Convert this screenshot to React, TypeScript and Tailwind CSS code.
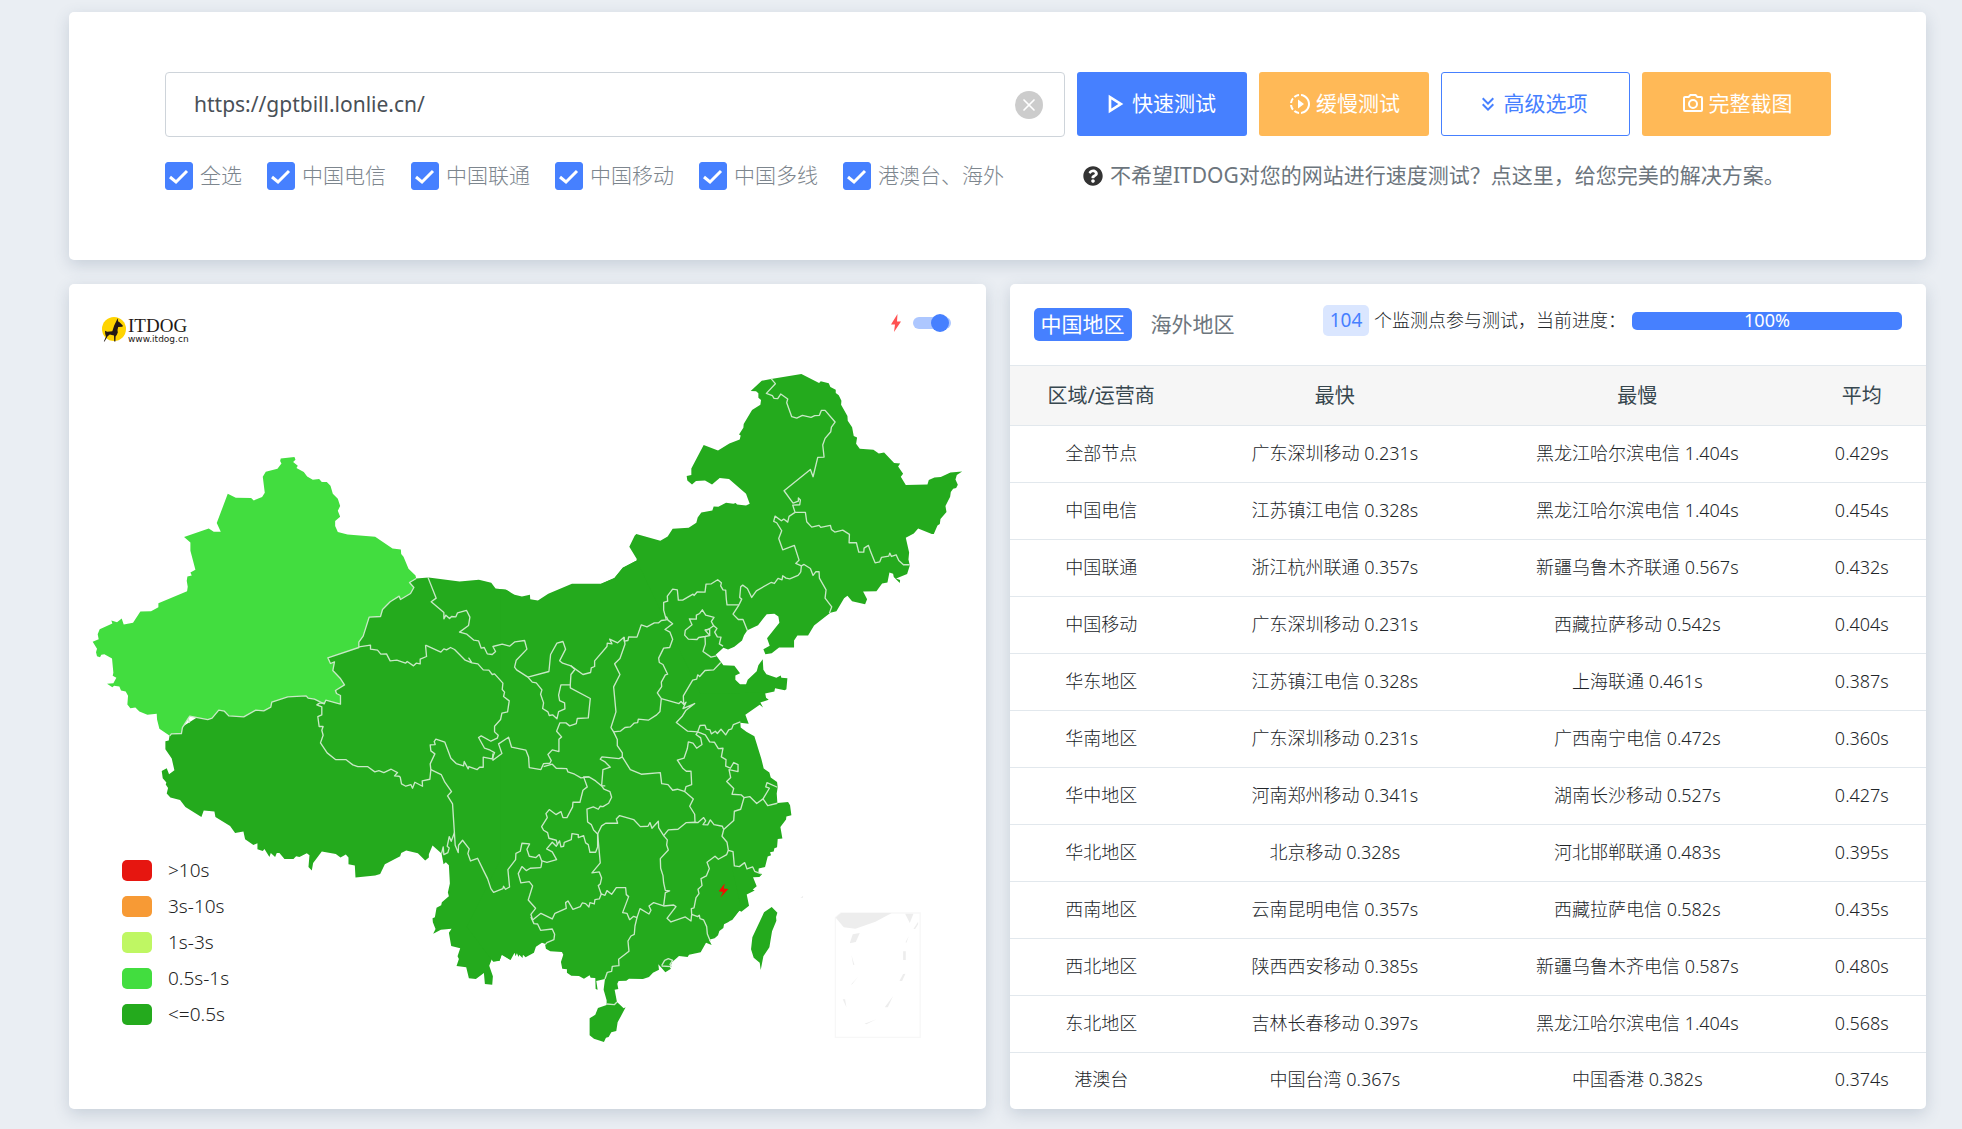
import React, { useState } from 'react';
import { X } from 'lucide-react';
import { FaQuestionCircle } from 'react-icons/fa';
import { MdOutlineSlowMotionVideo } from 'react-icons/md';

const carriers = ['全选', '中国电信', '中国联通', '中国移动', '中国多线', '港澳台、海外'];

const legend = [
  { label: '>10s', color: 'bg-[#e61610]' },
  { label: '3s-10s', color: 'bg-[#f79a35]' },
  { label: '1s-3s', color: 'bg-[#bff763]' },
  { label: '0.5s-1s', color: 'bg-[#42dd3f]' },
  { label: '<=0.5s', color: 'bg-[#24aa1d]' },
];

const results = [
  { area: '全部节点', fastest: '广东深圳移动 0.231s', slowest: '黑龙江哈尔滨电信 1.404s', average: '0.429s' },
  { area: '中国电信', fastest: '江苏镇江电信 0.328s', slowest: '黑龙江哈尔滨电信 1.404s', average: '0.454s' },
  { area: '中国联通', fastest: '浙江杭州联通 0.357s', slowest: '新疆乌鲁木齐联通 0.567s', average: '0.432s' },
  { area: '中国移动', fastest: '广东深圳移动 0.231s', slowest: '西藏拉萨移动 0.542s', average: '0.404s' },
  { area: '华东地区', fastest: '江苏镇江电信 0.328s', slowest: '上海联通 0.461s', average: '0.387s' },
  { area: '华南地区', fastest: '广东深圳移动 0.231s', slowest: '广西南宁电信 0.472s', average: '0.360s' },
  { area: '华中地区', fastest: '河南郑州移动 0.341s', slowest: '湖南长沙移动 0.527s', average: '0.427s' },
  { area: '华北地区', fastest: '北京移动 0.328s', slowest: '河北邯郸联通 0.483s', average: '0.395s' },
  { area: '西南地区', fastest: '云南昆明电信 0.357s', slowest: '西藏拉萨电信 0.582s', average: '0.435s' },
  { area: '西北地区', fastest: '陕西西安移动 0.385s', slowest: '新疆乌鲁木齐电信 0.587s', average: '0.480s' },
  { area: '东北地区', fastest: '吉林长春移动 0.397s', slowest: '黑龙江哈尔滨电信 1.404s', average: '0.568s' },
  { area: '港澳台', fastest: '中国台湾 0.367s', slowest: '中国香港 0.382s', average: '0.374s' },
];

const icons = {
  play: 'M8.5,8.64L13.77,12L8.5,15.36V8.64M6.5,5V19L17.5,12',
  chevrons:
    'M16.59,5.59L18,7L12,13L6,7L7.41,5.59L12,10.17L16.59,5.59M16.59,11.59L18,13L12,19L6,13L7.41,11.59L12,16.17L16.59,11.59Z',
  camera:
    'M20,4H16.83L15,2H9L7.17,4H4A2,2 0 0,0 2,6V18A2,2 0 0,0 4,20H20A2,2 0 0,0 22,18V6A2,2 0 0,0 20,4M20,18H4V6H8.05L9.88,4H14.12L15.95,6H20V18M12,7A5,5 0 0,0 7,12A5,5 0 0,0 12,17A5,5 0 0,0 17,12A5,5 0 0,0 12,7M12,15A3,3 0 0,1 9,12A3,3 0 0,1 12,9A3,3 0 0,1 15,12A3,3 0 0,1 12,15Z',
};

const Icon = ({ name, className }: { name: keyof typeof icons; className: string }) => (
  <svg viewBox="0 0 24 24" fill="currentColor" className={className} aria-hidden="true">
    <path d={icons[name]} />
  </svg>
);

const Logo = () => (
  <div className="mt-[3px] flex items-start gap-[2px]">
    <svg viewBox="0 0 24 25" className="w-6 h-[25px]" aria-hidden="true">
      <circle cx="12" cy="12" r="12" fill="#ffd400" />
      <path
        fill="#231815"
        d="M15.7 1.2L16.2 4.6L17.5 5.2L20.8 8.6L20.5 9.8L16.2 9.9L15.5 13L15.8 15.5L14.7 18L13.6 19.5L13.4 24.5H12.2L12 18.6L7.8 17.6L5.6 19.3L2.6 24.5H1.8L4 19.5L3.2 17L3 13.8L5.2 14.8L10.3 14.2L12.2 8.5Z"
      />
    </svg>
    <div className="text-[#231815]">
      <div className="text-[19px] leading-[18px] font-['Liberation_Serif',serif]">ITDOG</div>
      <div className="text-[9px] leading-[8px] font-['DejaVu_Sans',sans-serif]">www.itdog.cn</div>
    </div>
  </div>
);

const ChinaMap = () => (
  <svg viewBox="0 198 2748 2100" className="block w-full" role="img" aria-label="中国地区测速地图">
    <g fill="#24aa1d">
      {/* Tibet, Qinghai, Yunnan */}
      <path
        transform="translate(-27 1248)"
        d="M329 104L326 121L316 123V147L335 175L343 210L327 222L320 204L305 212L308 234L319 247L317 253L324 263L320 280L331 292L360 299L376 320L424 350L431 331L463 334L466 350L510 377L525 398L550 394L555 417L580 434L592 429V447L608 452L613 446L628 470L632 458L645 470L650 458H658L673 476H700L708 468L718 470L740 459L748 465L745 500L755 511L759 488L785 454L827 461L841 472L857 463L865 472V492L884 496L886 532L945 526L960 521L974 492L1020 468L1023 458L1038 451L1073 459L1095 481L1106 472V462L1117 436L1144 460L1150 492L1157 486L1166 495L1169 550L1163 577L1166 588L1145 606L1143 615L1129 622L1124 651L1117 654L1118 666L1126 686L1119 700L1142 688L1174 685L1166 697L1173 737L1200 744L1192 768L1196 776L1189 797L1218 801L1226 834L1247 836L1271 818L1274 851L1296 853L1298 828L1287 796L1295 776L1300 783L1318 781L1325 762L1350 778V-324L1338 -331L1306 -335L1293 -352L1256 -361L1198 -356L1105 -368L1068 -365Z"
      />
      {/* Northeast */}
      <path
        transform="translate(1593 198)"
        d="M0 702L43 684L68 653L109 631V626L87 590L103 557L108 552L180 572L202 559L217 536L265 533L288 518L292 502L303 487L336 481L340 469L354 470L377 458L399 461L406 459L410 463L437 466L448 461L437 431L386 387L358 384L335 403L314 391L287 393L275 403L261 391L259 378L273 375V355L310 285L353 301L387 280L418 268L421 256L416 253L429 233L430 222L455 180L480 164L482 150L474 143V130L467 124L451 123L484 92L512 87L603 72L656 99L661 94L685 100L690 111L706 119V129L715 136L723 152L722 164L741 198L742 212L755 232L760 258L770 262L767 281L778 296L819 299L835 310L851 307L881 339L899 340L893 349L908 371L901 380L916 405L981 403L985 390L1002 382L1021 381L1050 367L1085 364L1069 375L1065 388L1072 404L1067 414L1058 416L1051 426L1049 440L1035 468L1038 486L1020 507L1018 522L1011 526L1000 552H994L953 535L940 550L916 563L926 607L924 628L928 646L920 672L887 685L899 690L898 699L880 681L878 671L867 667L861 697L845 700L828 723L788 724L800 747L794 762L755 753L741 737L731 744L708 783L690 788L641 826L623 856H591L581 871V892H536L514 909L495 912L489 897L508 887L500 864L537 818L534 799L522 791L499 792L473 825L441 840L431 855L425 871L402 890L383 898L369 893L361 900L346 914L360 933L369 945L402 947L419 969L405 976V989L419 1002H437L442 989L469 963L474 945L487 927L489 959L498 972L528 983L541 976L543 983L561 984L558 1017L553 1020L524 1014L522 1024L494 1030V1050H0Z"
      />
      {/* Central and east */}
      <path
        transform="translate(993 768)"
        d="M300 147L317 149L343 164L365 169L389 164L390 177L413 181L444 161L515 131H602L642 114L667 83L709 61L900 460L1094 458L1097 473L1105 479L1080 487L1088 502L1078 494L1035 524L1045 551L1020 548L1021 562L1038 575L1062 588L1083 656L1090 685L1107 697L1111 712L1130 725L1132 740L1129 760L1131 788L1163 785L1169 795L1173 825L1158 829L1157 838L1140 860L1146 895L1132 896L1130 921L1122 924L1120 934L1109 936L1112 945L1102 949L1094 980L1075 985L1074 997L1085 1002L1077 1010L1058 1011L1069 1038L1057 1048L1063 1051L1039 1063L1046 1096L1025 1113L1018 1110L995 1140H300Z"
      />
      {/* South coast and Hainan */}
      <path
        transform="translate(993 1428)"
        d="M1025 454L1016 451L992 480L983 486L971 492L969 503L957 512L953 525L943 534L926 538L934 554L917 547L901 576L866 583L862 590L836 587L815 606L809 622L812 625L795 636L774 612L776 628L758 637L746 650L728 656L686 655L678 661L655 662L651 670L654 686L643 688L650 725L670 744L676 741L652 786L648 812L633 816L625 830L617 832L611 845L581 835L568 825V774L585 763L593 743L619 734V720L610 688L614 656L588 662L592 688L586 686L585 653L571 652L568 645L551 655L536 647L513 646L500 637V627L486 625L482 605L489 583L485 575L450 573L437 565L434 550L425 547L407 559L401 577L376 591L368 583L367 593L357 583L355 590L350 579L346 588L343 577L331 599L304 583L298 601L279 604L200 500L300 300L990 300Z"
      />
      {/* Taiwan */}
      <path
        transform="translate(993 1428)"
        d="M1114 440L1131 457L1127 470L1128 481L1115 513L1107 561L1089 588L1081 629L1078 607L1060 592L1052 567L1056 531L1091 456Z"
      />
    </g>

    {/* Province borders */}
    <g fill="none" stroke="#c8e9c6" strokeWidth="4" strokeLinejoin="round">
      {/* Xinjiang */}
      <path
        transform="translate(-27 -12)"
        fill="#42dd3f"
        stroke="none"
        d="M662 535L703 531L706 539L699 546L713 557L709 564L731 576L741 589L758 599L777 597L785 606H800L811 617L818 641L833 656L840 678L833 692L840 710L825 723V738L833 756L862 763L945 770L997 805L1022 808L1023 822L1030 830L1045 866L1066 886L1068 895L1048 907L1061 922L1051 940L1021 958L1017 948L990 965L967 988L961 1009L927 1011L909 1068L896 1086V1102L803 1133L811 1150L823 1145L818 1171L840 1194L853 1214L826 1231L829 1240L841 1246V1272L797 1260L792 1271L763 1257L744 1254L738 1247L683 1250L635 1266L632 1281L611 1292L587 1290L551 1310L506 1307L493 1293L476 1290L456 1314L443 1318L389 1308L384 1315L367 1342L364 1360L334 1361L329 1367L298 1346L291 1318L290 1301L262 1304L238 1294L226 1282L211 1284L202 1273L204 1247L197 1234L183 1231L178 1219L162 1217L157 1221L141 1211L160 1209L169 1193L158 1187L160 1178L156 1135L133 1122L124 1124L120 1131L111 1128L108 1116L111 1106L98 1085L116 1077L113 1062L119 1047L157 1030L154 1021L171 1026L185 1015L191 1033L219 1028L241 994L273 993L295 981V969L381 933L383 920L380 902L382 889L395 886L391 877L406 869L391 812V787L372 771L446 745L461 755H482L470 729L503 641L527 653L573 654L581 661L606 651L614 638L608 590L617 575L652 566L664 550L660 543Z"
      />
      <g transform="translate(-27 -12)">
        <path d="M1068 895L1048 907L1061 922L1051 940L1021 958L1017 948L990 965L967 988L961 1009L927 1011L909 1068L896 1086V1102L803 1133L811 1150L823 1145L818 1171L840 1194L853 1214L826 1231L829 1240L841 1246V1272L797 1260L792 1271L763 1257L744 1254L738 1247L683 1250L635 1266L632 1281L611 1292L587 1290L551 1310L506 1307L493 1293L476 1290L456 1314L443 1318L389 1308L384 1315L388 1326L384 1315L367 1342L364 1360L334 1361L329 1367" />
        <path d="M896 1100L931 1095V1107L952 1110L962 1122L979 1121L990 1142L1010 1140L1036 1149L1041 1144L1060 1157L1068 1149L1080 1151V1137L1099 1129L1096 1095" />
      </g>
      <path
        transform="translate(-27 1248)"
        d="M1020 230L1017 228L1003 227L1012 217L993 207L971 217L956 211L944 215L922 199H893L878 194L857 178H826L801 158L781 128L789 105L785 90L789 79H777L773 49L785 44V20L770 14L778 9H792"
      />
      <g transform="translate(1593 198)">
        <path d="M603 647L586 640L596 630L582 586L547 599L535 565L544 542L529 518L520 514L524 498L543 512L550 507L562 516L566 499L584 487L577 465L598 464L600 450L594 444V453L578 459L551 422L630 358L638 380L652 322L671 321L667 285L674 265L691 245L693 231L704 216L674 181H663L657 196L643 197L632 202L606 196L589 204L574 200L559 158L562 147L541 132L532 146L521 145L516 137L498 130L525 101L512 86" />
        <path d="M584 487H615L619 515L634 531L656 526L661 532L690 526L693 538L703 546L727 540L747 553L746 578H768L775 606H790L791 594L804 586L811 606L824 638L838 635L843 622L865 618L868 609L873 619L887 614L895 631L909 644H928" />
        <path d="M601 666L603 647L611 643L630 655L638 676L646 665H656L657 684L677 719L674 744L694 770L687 789" />
      </g>
      <g transform="translate(993 768)">
        {/* Inner Mongolia */}
        <path d="M83 111L108 174L93 185L131 217V236L137 225L148 235L154 229L167 230L172 218L199 211L209 231L205 256L178 276L200 282L221 300L235 302L243 324L252 322L261 341L276 343L286 334L278 319L306 312L328 318L344 305L373 301L380 327L348 360L343 381L349 389L383 411L446 394L451 343L470 309L488 304L496 327L478 362L487 369L512 377L548 403L571 397L573 383L583 379V362L620 319L621 309L635 311L628 297L652 308L671 291L672 303L683 301L685 290L710 291L723 254L740 260L762 248L775 248L783 241L798 239L790 210V187L802 183L801 168L817 147L831 149L834 180H847L878 162L881 166L891 155L914 156L917 132L933 131L952 119L963 128L961 137L968 149L976 150L978 178L980 194H1016" />
        <path d="M1016 194L1024 177L1018 172L1021 140L1027 135L1041 145L1054 172L1068 152L1112 127L1122 130L1133 115L1145 119L1147 107L1157 114L1168 116L1193 106L1201 96" />
        <path d="M1016 194L998 222L1014 238H1028L1041 271" />
        {/* Shanxi, Hebei, Shandong */}
        <path d="M671 291L674 312L659 355L643 371L659 403L640 440L647 515L632 562L640 575L660 573L674 562L690 560L701 549L712 547L714 537L744 540L769 524L779 514L783 475L771 458L784 439L783 426L795 404L802 402L788 373L777 367L775 354L790 324L808 322L817 297L809 276L794 268L817 251L803 240L798 229" />
        <path d="M783 475L836 490L842 484L850 492L849 467L877 420L889 417L892 404L898 409L914 391L940 389L961 367" />
        <path d="M850 492L857 486L848 505L883 490L857 510L845 529L828 547L862 573L892 575L899 556L914 555L918 567L929 569L933 581L945 573L951 580L962 567L976 584L985 569L994 566L999 553L1020 545" />
        {/* Beijing and Tianjin */}
        <path d="M906 209L916 225L941 232L933 244L940 257L924 268L914 270L928 286L914 289L895 292L890 298L864 297L853 285L855 270L875 254L867 236L888 237V225L898 220Z" />
        <path d="M914 270L928 266V286M940 257L950 265L943 276L951 290L962 291L957 311L968 318M914 289L915 312L908 334L932 351L948 347" />
        {/* Ningxia and Gansu */}
        <path d="M383 411L396 426L408 428L425 449L421 462L430 488L427 505L443 515L447 526L457 524L470 536L475 514L494 506L493 488L478 481L475 465L482 434H510L512 403L524 388L512 377" />
        <path d="M510 434V443L570 475L564 533L531 535L528 550L508 557L497 548H479L469 573L484 590L476 597V634L456 629L443 643L453 661L449 669L430 670L422 688L387 682L385 650L377 630L334 621L325 591L295 611L305 640L278 660V640" />
        <path d="M76 315L122 336L131 326L139 329L151 322L163 328L195 360L215 368L206 354L215 368L233 371L249 389L266 390L276 403L283 401L308 429L306 448L313 456L310 469L327 482L322 515L305 519L301 538L283 558V575L294 585L291 594L272 603L243 587L235 592L253 624L270 630L283 637L275 656L249 651V681H238L231 688L206 679L204 686L192 664L190 677L168 670L152 654L134 606L107 597L102 604L105 613L90 614L92 632L104 641L90 671L92 688L89 717L66 722L67 738L44 726L37 744L32 733L17 738L4 731L0 710" />
        {/* Sichuan, Chongqing, Yunnan */}
        <path d="M92 688L123 703L134 726L154 754L142 767L157 791L165 915L174 937L175 915L187 900L207 926L203 940L211 962L232 954L250 991L262 1015L272 1045L280 1056L308 1045L310 1038L316 1047L328 1040L323 988L346 958L347 939L360 933L365 909L388 911L380 927L387 948L407 952L417 943L425 964L422 982" />
        <path d="M124 940L129 920L131 943L143 937L147 923L141 918L147 889L153 903L163 877" />
        <path d="M425 962L440 966L469 958L456 935L439 926L456 906L468 918L478 902L482 920L490 918L492 906L513 898L515 880L534 883V892L550 886L556 908L564 913L569 936H586L592 920V880" />
        <path d="M430 679L456 672L468 684L499 685L503 695L523 702L542 713L566 710L586 722L604 737H615" />
        <path d="M566 710H550L561 740L548 750L539 786H518L517 800L500 832H488L482 814L467 823L447 808L437 820L441 832L424 859L430 870L442 877L446 894L468 900L472 915" />
        <path d="M604 737L611 747L629 754L634 771L625 789L608 799L600 798L594 807L579 800L560 807L562 845L573 853L580 869L592 881L600 968L575 998L597 995L604 1013L600 1031L594 1036L603 1062" />
        {/* Hubei, Henan, Anhui, Jiangsu */}
        <path d="M640 575L651 598V616L666 638V650L656 655L605 650L600 657L613 664L630 681L608 688L604 737M666 650L690 688L723 702L780 697L784 730L803 733L817 750L831 747L854 754" />
        <path d="M892 575L887 583L901 593L905 613L889 624L878 609L864 605L861 625L851 654L831 660L848 685L858 693H872L874 733L857 739L853 754L879 776L868 798L883 822L884 846" />
        <path d="M892 575L915 584L928 605L942 606L954 625L968 624L963 650L977 658L976 678L990 684L1000 667L1013 673V694L986 688L991 712L979 724L1000 745L995 762L1023 764L1031 772L1048 769L1069 790L1088 776L1102 796L1131 789" />
        <path d="M1088 776L1107 744L1096 740L1100 727L1131 741" />
        {/* Hunan, Jiangxi, Zhejiang, Fujian */}
        <path d="M1031 772L1021 807L1002 813L1000 841L970 868L965 888L980 906L984 930L998 934L1002 977L1017 979L1033 967L1040 986L1057 980L1063 993L1083 1001" />
        <path d="M970 868L966 858L941 853L930 839L922 854L908 853L916 842L910 832L893 847L884 846L858 847L833 867L804 869L790 886L775 862L774 843L755 864L749 847L743 858L720 859L700 838L658 826L648 836L652 849L616 849L604 857L592 881" />
        <path d="M790 886L801 899L799 914L804 929L780 955L781 984L788 1006L790 1028L795 1050L808 1052L795 1057L790 1096" />
        <path d="M984 930L979 943L954 957L944 948L920 966L927 985L918 1007L902 1015L905 1036L893 1047L896 1060L887 1072L881 1103L873 1105L874 1122" />
        <path d="M422 982L390 984L378 991L365 979L354 1000L362 1028L387 1024L397 1037L384 1079L406 1104L392 1122L397 1139" />
      </g>
      <g transform="translate(993 1428)">
        {/* Guangxi, Guangdong, Hainan */}
        <path d="M397 479L422 459L456 476L464 459L498 444L496 427L503 422L518 447L540 439L546 428L556 430L566 440L569 427L582 431L584 418L597 416L603 401L614 405L620 391L634 402L648 382H676L678 403L685 409L667 457L680 459L688 478L700 468L710 472L719 445L746 461L752 450L746 437L760 427L790 437L820 434L827 439L800 474L812 485L855 470L872 482L874 462L892 469L897 465L899 475L910 479L919 499L921 521L930 543" />
        <path d="M710 472L704 497L702 522L692 527L683 542L686 573L655 597L656 616L636 618L634 633L621 636L614 656" />
        <path d="M392 470L401 490L412 491L421 510L456 506L463 522L461 538L440 547L435 553" />
        <path d="M784 616L793 600L804 595L817 600L809 612L813 619L784 617M619 731L642 733L650 725" />
      </g>
    </g>

    {/* Test origin */}
    <path transform="translate(993 768)" fill="#f10d00" d="M973 1030L955 1053L968 1055L960 1072L984 1046L970 1045Z" />

    {/* South China Sea inset */}
    <g transform="translate(2193 1728)" fill="#ededed">
      <path fill="none" stroke="#f7f7f7" strokeWidth="4" d="M122 158H359V531H105V172Z" />
      <path d="M106 172L122 158H274L225 184L165 205L130 201Z" />
      <path d="M314 160H339L328 188ZM353 184V192L344 206H339ZM325 227L318 247L315 246ZM308 273H316V299H308ZM308 341L315 340L305 362H297ZM278 407L262 441H253ZM228 477L198 492L192 490ZM127 417H134L138 441ZM173 349L156 371L151 373ZM153 284L162 314L158 313ZM157 222L178 218L166 245L148 249Z" />
      <path d="M0 113L8 106V112Z" />
    </g>
  </svg>
);

const App = () => {
  const [url, setUrl] = useState('https://gptbill.lonlie.cn/');
  const [region, setRegion] = useState('中国地区');

  return (
    <div className="min-h-screen bg-[#eaeef3] pt-3 pb-5 pl-[69px] pr-9 flex flex-col gap-6 text-[#3a3f44] font-['Noto_Sans','Noto_Sans_CJK_SC',sans-serif]">
      {/* Search form */}
      <section className="bg-white rounded-[5px] shadow-[0_5px_16px_rgba(60,85,115,0.2)] pl-24 pr-[95px] pt-[60px] pb-[69px]">
        <form className="flex gap-3" onSubmit={(e) => e.preventDefault()}>
          <div className="flex-1 h-[65px] flex items-center border border-[#ced4da] rounded pl-7 pr-[21px]">
            <input
              type="text"
              aria-label="网址"
              value={url}
              onChange={(e) => setUrl(e.target.value)}
              className="flex-1 min-w-0 text-[21px] text-[#495057] outline-none"
            />
            <button
              type="button"
              aria-label="清空"
              onClick={() => setUrl('')}
              className="w-7 h-7 rounded-full bg-[#ccc] text-white flex items-center justify-center"
            >
              <X className="w-5 h-5" strokeWidth={2} />
            </button>
          </div>
          <button type="submit" className="w-[170px] h-16 pr-2 rounded-[3px] bg-[#4680ff] text-white text-[21px] flex items-center justify-center">
            <Icon name="play" className="w-8 h-8" />
            快速测试
          </button>
          <button type="button" className="w-[170px] h-16 rounded-[3px] bg-[#ffb957] text-white text-[21px] flex items-center justify-center gap-1">
            <MdOutlineSlowMotionVideo className="w-6 h-6" />
            缓慢测试
          </button>
          <button type="button" className="w-[189px] h-16 pr-2 rounded-[3px] border border-[#4680ff] text-[#4680ff] text-[21px] flex items-center justify-center gap-1">
            <Icon name="chevrons" className="w-6 h-6" />
            高级选项
          </button>
          <button type="button" className="w-[189px] h-16 rounded-[3px] bg-[#ffb957] text-white text-[21px] flex items-center justify-center gap-1">
            <Icon name="camera" className="w-6 h-6" />
            完整截图
          </button>
        </form>

        <div className="mt-[23px] flex items-center gap-3 text-[21px] leading-[31px]">
          <div className="flex-1 flex gap-[25px] text-[#7d868e] font-light">
            {carriers.map((name) => (
              <label key={name} className="flex items-center gap-[7px]">
                <span className="grid w-7 h-7">
                  <input
                    type="checkbox"
                    defaultChecked
                    className="peer [grid-area:1/1] w-7 h-7 appearance-none rounded-[3px] border border-[#4680ff] checked:bg-[#4680ff]"
                  />
                  <svg
                    viewBox="0 0 28 28"
                    className="[grid-area:1/1] w-7 h-7 pointer-events-none invisible peer-checked:visible"
                    aria-hidden="true"
                  >
                    <path d="M5 15L11 20L22 9" fill="none" stroke="#fff" strokeWidth="3" />
                  </svg>
                </span>
                {name}
              </label>
            ))}
          </div>
          <a href="#" className="w-[754px] pl-[6px] flex items-center gap-[7px] text-[#6c757d] whitespace-nowrap">
            <FaQuestionCircle className="w-5 h-5 text-[#333]" />
            <span>不希望ITDOG对您的网站进行速度测试？点这里，给您完美的解决方案。</span>
          </a>
        </div>
      </section>

      <div className="grid grid-cols-2 gap-6">
        {/* Map */}
        <section className="relative bg-white rounded-[5px] shadow-[0_5px_16px_rgba(60,85,115,0.2)]">
          <div className="h-[66px] pt-[30px] pl-[33px] pr-[35px] flex items-start justify-between">
            <Logo />
            <label className="h-[18px] flex items-center gap-3">
              <svg viewBox="0 0 10 18" className="w-[10px] h-[18px]" aria-hidden="true">
                <path d="M6.5 0L0 10.5H4L3 18L10 7.5H6Z" fill="#ff5252" />
              </svg>
              <input
                type="checkbox"
                aria-label="仅显示测速点"
                defaultChecked
                className="relative w-[38px] h-3 appearance-none rounded-full bg-[#adc7ff] before:absolute before:-top-[3px] before:right-[2px] before:w-[18px] before:h-[18px] before:rounded-full before:bg-[#4680ff] before:content-['']"
              />
            </label>
          </div>
          <ChinaMap />
          <ul className="absolute left-[53px] bottom-[76px] flex flex-col text-[19px] leading-8 font-light text-[#222]">
            {legend.map((item) => (
              <li key={item.label} className="h-9 flex items-center gap-4">
                <span className={`w-[30px] h-[21px] rounded-[5px] ${item.color}`} />
                <span className="pb-[2px]">{item.label}</span>
              </li>
            ))}
          </ul>
        </section>

        {/* Results */}
        <section className="bg-white rounded-[5px] overflow-hidden shadow-[0_5px_16px_rgba(60,85,115,0.2)]">
          <div className="h-[81px] px-6 flex items-start justify-between">
            <div className="pt-6 flex gap-3 text-[21px] leading-[33px]">
              {['中国地区', '海外地区'].map((name) => (
                <button
                  key={name}
                  onClick={() => setRegion(name)}
                  className={`h-[33px] px-[7px] rounded-[5px] ${region === name ? 'bg-[#4680ff] text-white' : 'text-[#6c757d]'}`}
                >
                  {name}
                </button>
              ))}
            </div>
            <div className="pt-[21px] flex items-center text-[18px]">
              <span className="w-[46px] h-[31px] rounded-[5px] bg-[#dae6ff] text-[#4680ff] text-[19px] leading-[31px] text-center">104</span>
              <span className="ml-[5px] font-light text-[#212529]">个监测点参与测试，当前进度：</span>
              <div
                role="progressbar"
                aria-valuenow={100}
                className="ml-[6px] w-[270px] h-[18px] rounded-[5px] bg-[#4680ff] text-white leading-4 text-center"
              >
                100%
              </div>
            </div>
          </div>
          <table className="w-full table-fixed text-center text-[18px]">
            <thead className="bg-[#f6f6f6] text-[20px] text-[#37474f]">
              <tr className="h-[60px] border-y border-[#e2e8ed]">
                <th className="w-[20%] font-normal">区域/运营商</th>
                <th className="w-[31%] font-normal">最快</th>
                <th className="w-[35%] font-normal">最慢</th>
                <th className="w-[14%] font-normal">平均</th>
              </tr>
            </thead>
            <tbody className="font-light text-[#212529]">
              {results.map((row) => (
                <tr key={row.area} className="h-[57px] border-b border-[#e2e8ed] last:h-14 last:border-b-0">
                  <td className="pb-[2px]">{row.area}</td>
                  <td className="pb-[2px]">{row.fastest}</td>
                  <td className="pb-[2px]">{row.slowest}</td>
                  <td className="pb-[2px]">{row.average}</td>
                </tr>
              ))}
            </tbody>
          </table>
        </section>
      </div>
    </div>
  );
};

export default App;
